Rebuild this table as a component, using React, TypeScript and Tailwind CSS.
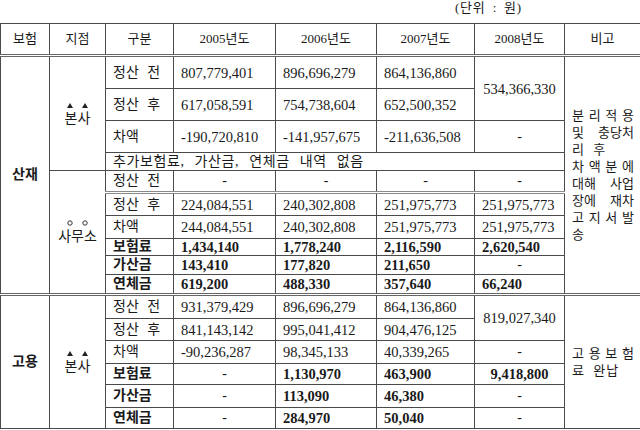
import React from 'react';

const font = "font-['Liberation_Serif','Noto_Sans_CJK_KR',serif]";

type TdProps = React.TdHTMLAttributes<HTMLTableCellElement> & { className?: string };

const Td = ({ className = '', children, ...rest }: TdProps) => (
  <td className={`border border-[#4a4a4a] px-[7px] py-0 leading-[16px] ${className}`} {...rest}>
    {children}
  </td>
);

// number cell, left aligned
const N = ({ v, b, c, ...rest }: { v: string; b?: boolean; c?: string } & TdProps) => (
  <Td className={`text-left text-[14.5px] ${b ? 'font-bold' : ''} ${c ?? ''}`} {...rest}>
    {v}
  </Td>
);

const Dash = ({ c = '' }: { c?: string }) => <Td className={`text-center text-[14px] ${c}`}>-</Td>;

const Lbl = ({ t, b, c = '' }: { t: string; b?: boolean; c?: string }) => (
  <Td className={`text-left text-[14px] [word-spacing:5px] ${b ? 'font-bold' : ''} ${c}`}>{t}</Td>
);

const Tri = () => (
  <svg width="6" height="5" viewBox="0 0 6 5">
    <polygon points="3,0 6,5 0,5" fill="#222" />
  </svg>
);

const Ring = () => (
  <svg width="6" height="6" viewBox="0 0 6 6">
    <circle cx="3" cy="3" r="2.2" fill="none" stroke="#333" strokeWidth="1" />
  </svg>
);

const Branch = ({ name, mark }: { name: string; mark: 'tri' | 'ring' }) => (
  <div className="flex flex-col items-center">
    <div className="flex gap-[9px] h-[8px] items-end">
      {mark === 'tri' ? (
        <>
          <Tri />
          <Tri />
        </>
      ) : (
        <>
          <Ring />
          <Ring />
        </>
      )}
    </div>
    <div className="text-[14px] leading-[18px] mt-[2px]">{name}</div>
  </div>
);

// j: 'c' spreads every character, 'w' spreads words, 'n' leaves as is
type Line = { t: string; j: 'c' | 'w' | 'n' };

const Note = ({ lines }: { lines: Line[] }) => (
  <div className="text-[13px] leading-[17px]">
    {lines.map((l, i) => {
      if (l.j === 'n') {
        return (
          <div key={i} className="text-left tracking-[1px] [word-spacing:4px]">
            {l.t}
          </div>
        );
      }
      const parts = l.j === 'c' ? l.t.split('') : l.t.split(' ');
      return (
        <div key={i} className="flex justify-between">
          {parts.map((p, k) => (
            <span key={k}>{p}</span>
          ))}
        </div>
      );
    })}
  </div>
);

const T2 = 'border-t-[3px] [border-top-style:double] border-t-[#666]';
const G2 = 'border-t-[3px] [border-top-style:double] border-t-[#8a8a8a]';

export default function App() {
  return (
    <div className={`w-[640px] h-[430px] bg-white text-[#1a1a1a] ${font} overflow-hidden`}>
      <div className="h-[23px] flex justify-end pr-[118px] text-[13px] leading-[15px] tracking-[0.8px] [word-spacing:3px]">
        (단위 : 원)
      </div>
      <table className="table-fixed border-collapse w-[640px]">
        <colgroup>
          <col className="w-[49px]" />
          <col className="w-[56px]" />
          <col className="w-[68px]" />
          <col className="w-[102px]" />
          <col className="w-[101px]" />
          <col className="w-[98px]" />
          <col className="w-[90px]" />
          <col className="w-[76px]" />
        </colgroup>
        <thead>
          <tr className="h-[32px]">
            {['보험', '지점', '구분', '2005년도', '2006년도', '2007년도', '2008년도', '비고'].map((h) => (
              <th
                key={h}
                className="border border-[#4a4a4a] border-b-[3px] [border-bottom-style:double] border-b-[#666] text-center text-[13px] font-normal px-0"
              >
                {h}
              </th>
            ))}
          </tr>
        </thead>
        <tbody>
          {/* 산재 - 본사 */}
          <tr className="h-[33px]">
            <Td rowSpan={10} className="text-center text-[14px] font-bold px-0">
              산재
            </Td>
            <Td rowSpan={4} className="px-0">
              <Branch name="본사" mark="tri" />
            </Td>
            <Lbl t="정산 전" />
            <N v="807,779,401" />
            <N v="896,696,279" />
            <N v="864,136,860" />
            <Td rowSpan={2} className="text-center text-[14.5px]">
              534,366,330
            </Td>
            <Td rowSpan={10} className="pl-[7px] pr-[6px]">
              <Note
                lines={[
                  { t: '분리적용', j: 'c' },
                  { t: '및 충당처', j: 'w' },
                  { t: '리 후', j: 'n' },
                  { t: '차액분에', j: 'c' },
                  { t: '대해 사업', j: 'w' },
                  { t: '장에 재차', j: 'w' },
                  { t: '고지서발', j: 'c' },
                  { t: '송', j: 'n' },
                ]}
              />
            </Td>
          </tr>
          <tr className="h-[32px]">
            <Lbl t="정산 후" />
            <N v="617,058,591" />
            <N v="754,738,604" />
            <N v="652,500,352" />
          </tr>
          <tr className="h-[32px]">
            <Lbl t="차액" />
            <N v="-190,720,810" />
            <N v="-141,957,675" />
            <N v="-211,636,508" />
            <Dash />
          </tr>
          <tr className="h-[18px]">
            <Td colSpan={5} className="text-left text-[14px] tracking-[0.6px] [word-spacing:6px]">
              추가보험료, 가산금, 연체금 내역 없음
            </Td>
          </tr>

          {/* 산재 - 사무소 */}
          <tr className="h-[22px]">
            <Td rowSpan={6} className="px-0">
              <Branch name="사무소" mark="ring" />
            </Td>
            <Lbl t="정산 전" />
            <Dash />
            <Dash />
            <Dash />
            <Dash />
          </tr>
          <tr className="h-[23px]">
            <Lbl t="정산 후" c={G2} />
            <N v="224,084,551" c={G2} />
            <N v="240,302,808" c={G2} />
            <N v="251,975,773" c={G2} />
            <N v="251,975,773" c={G2} />
          </tr>
          <tr className="h-[23px]">
            <Lbl t="차액" />
            <N v="244,084,551" />
            <N v="240,302,808" />
            <N v="251,975,773" />
            <N v="251,975,773" />
          </tr>
          <tr className="h-[17px]">
            <Lbl t="보험료" b />
            <N v="1,434,140" b />
            <N v="1,778,240" b />
            <N v="2,116,590" b />
            <N v="2,620,540" b />
          </tr>
          <tr className="h-[19px]">
            <Lbl t="가산금" b />
            <N v="143,410" b />
            <N v="177,820" b />
            <N v="211,650" b />
            <Dash />
          </tr>
          <tr className="h-[20px]">
            <Lbl t="연체금" b />
            <N v="619,200" b />
            <N v="488,330" b />
            <N v="357,640" b />
            <N v="66,240" b />
          </tr>

          {/* 고용 - 본사 */}
          <tr className="h-[24px]">
            <Td rowSpan={6} className={`text-center text-[14px] font-bold px-0 ${T2}`}>
              고용
            </Td>
            <Td rowSpan={6} className={`px-0 ${T2}`}>
              <Branch name="본사" mark="tri" />
            </Td>
            <Lbl t="정산 전" c={T2} />
            <N v="931,379,429" c={T2} />
            <N v="896,696,279" c={T2} />
            <N v="864,136,860" c={T2} />
            <Td rowSpan={2} className={`text-center text-[14.5px] ${T2}`}>
              819,027,340
            </Td>
            <Td rowSpan={6} className={`pl-[7px] pr-[6px] ${T2}`}>
              <Note
                lines={[
                  { t: '고용보험', j: 'c' },
                  { t: '료 완납', j: 'n' },
                ]}
              />
            </Td>
          </tr>
          <tr className="h-[22px]">
            <Lbl t="정산 후" />
            <N v="841,143,142" />
            <N v="995,041,412" />
            <N v="904,476,125" />
          </tr>
          <tr className="h-[23px]">
            <Lbl t="차액" />
            <N v="-90,236,287" />
            <N v="98,345,133" />
            <N v="40,339,265" />
            <Dash />
          </tr>
          <tr className="h-[21px]">
            <Lbl t="보험료" b />
            <Dash />
            <N v="1,130,970" b />
            <N v="463,900" b />
            <Td className="text-center text-[14.5px] font-bold">9,418,800</Td>
          </tr>
          <tr className="h-[23px]">
            <Lbl t="가산금" b />
            <Dash />
            <N v="113,090" b />
            <N v="46,380" b />
            <Dash />
          </tr>
          <tr className="h-[21px]">
            <Lbl t="연체금" b />
            <Dash />
            <N v="284,970" b />
            <N v="50,040" b />
            <Dash />
          </tr>
        </tbody>
      </table>
    </div>
  );
}
